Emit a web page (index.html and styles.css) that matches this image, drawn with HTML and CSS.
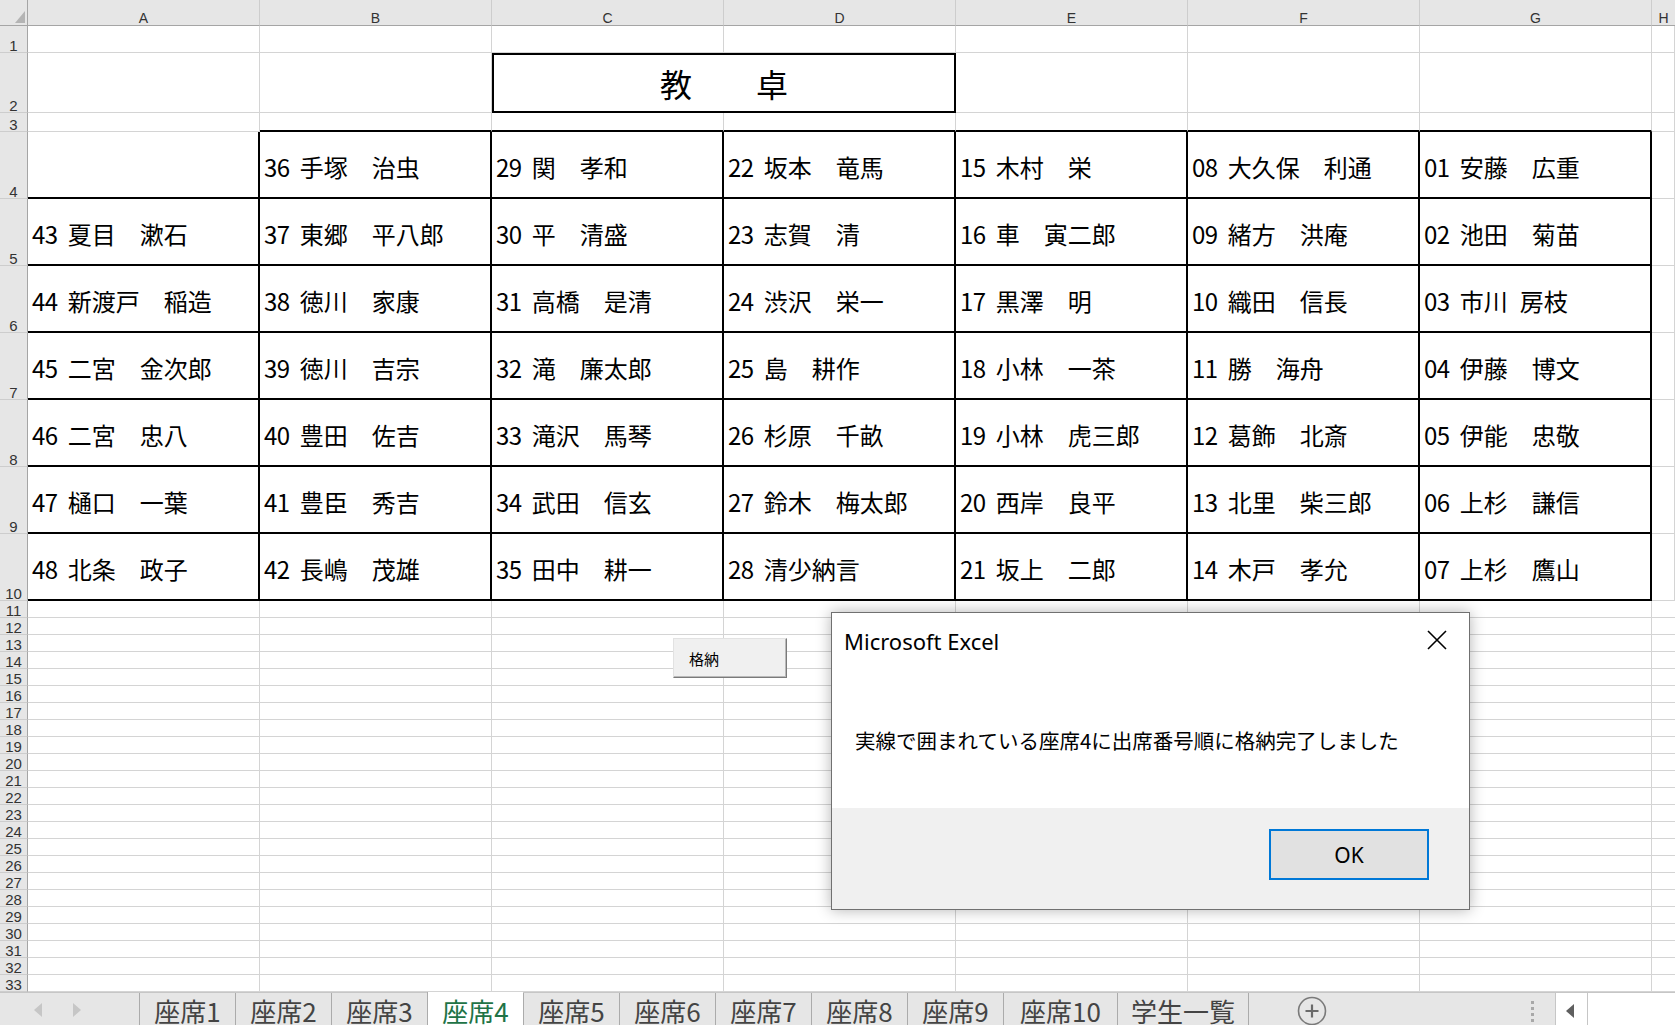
FILE: index.html
```html
<!DOCTYPE html>
<html lang="ja">
<head>
<meta charset="utf-8">
<title>座席4 - Excel</title>
<link rel="stylesheet" href="styles.css">
</head>
<body>
<div class="app">
  <div class="sheet">
    <div class="corner"></div>
    <div class="ch">A</div><div class="ch">B</div><div class="ch">C</div><div class="ch">D</div><div class="ch">E</div><div class="ch">F</div><div class="ch">G</div><div class="ch last">H</div>

    <div class="rh">1</div>
    <div class="c"></div><div class="c"></div><div class="c"></div><div class="c"></div><div class="c"></div><div class="c"></div><div class="c"></div><div class="c"></div>

    <div class="rh">2</div>
    <div class="c"></div><div class="c"></div><div class="teacher">教　　卓</div><div class="c"></div><div class="c"></div><div class="c"></div><div class="c"></div>

    <div class="rh">3</div>
    <div class="c"></div><div class="c tb"></div><div class="c tb"></div><div class="c tb"></div><div class="c tb"></div><div class="c tb"></div><div class="c tb"></div><div class="c"></div>

    <div class="rh">4</div>
    <div class="c tr tb"></div>
    <div class="s"><span class="n">36</span>手塚　治虫</div>
    <div class="s"><span class="n">29</span>関　孝和</div>
    <div class="s"><span class="n">22</span>坂本　竜馬</div>
    <div class="s"><span class="n">15</span>木村　栄</div>
    <div class="s"><span class="n">08</span>大久保　利通</div>
    <div class="s"><span class="n">01</span>安藤　広重</div>
    <div class="c"></div>

    <div class="rh">5</div>
    <div class="s"><span class="n">43</span>夏目　漱石</div>
    <div class="s"><span class="n">37</span>東郷　平八郎</div>
    <div class="s"><span class="n">30</span>平　清盛</div>
    <div class="s"><span class="n">23</span>志賀　清</div>
    <div class="s"><span class="n">16</span>車　寅二郎</div>
    <div class="s"><span class="n">09</span>緒方　洪庵</div>
    <div class="s"><span class="n">02</span>池田　菊苗</div>
    <div class="c"></div>

    <div class="rh">6</div>
    <div class="s"><span class="n">44</span>新渡戸　稲造</div>
    <div class="s"><span class="n">38</span>徳川　家康</div>
    <div class="s"><span class="n">31</span>高橋　是清</div>
    <div class="s"><span class="n">24</span>渋沢　栄一</div>
    <div class="s"><span class="n">17</span>黒澤　明</div>
    <div class="s"><span class="n">10</span>織田　信長</div>
    <div class="s"><span class="n">03</span>市川&ensp;房枝</div>
    <div class="c"></div>

    <div class="rh">7</div>
    <div class="s"><span class="n">45</span>二宮　金次郎</div>
    <div class="s"><span class="n">39</span>徳川　吉宗</div>
    <div class="s"><span class="n">32</span>滝　廉太郎</div>
    <div class="s"><span class="n">25</span>島　耕作</div>
    <div class="s"><span class="n">18</span>小林　一茶</div>
    <div class="s"><span class="n">11</span>勝　海舟</div>
    <div class="s"><span class="n">04</span>伊藤　博文</div>
    <div class="c"></div>

    <div class="rh">8</div>
    <div class="s"><span class="n">46</span>二宮　忠八</div>
    <div class="s"><span class="n">40</span>豊田　佐吉</div>
    <div class="s"><span class="n">33</span>滝沢　馬琴</div>
    <div class="s"><span class="n">26</span>杉原　千畝</div>
    <div class="s"><span class="n">19</span>小林　虎三郎</div>
    <div class="s"><span class="n">12</span>葛飾　北斎</div>
    <div class="s"><span class="n">05</span>伊能　忠敬</div>
    <div class="c"></div>

    <div class="rh">9</div>
    <div class="s"><span class="n">47</span>樋口　一葉</div>
    <div class="s"><span class="n">41</span>豊臣　秀吉</div>
    <div class="s"><span class="n">34</span>武田　信玄</div>
    <div class="s"><span class="n">27</span>鈴木　梅太郎</div>
    <div class="s"><span class="n">20</span>西岸　良平</div>
    <div class="s"><span class="n">13</span>北里　柴三郎</div>
    <div class="s"><span class="n">06</span>上杉　謙信</div>
    <div class="c"></div>

    <div class="rh">10</div>
    <div class="s"><span class="n">48</span>北条　政子</div>
    <div class="s"><span class="n">42</span>長嶋　茂雄</div>
    <div class="s"><span class="n">35</span>田中　耕一</div>
    <div class="s"><span class="n">28</span>清少納言</div>
    <div class="s"><span class="n">21</span>坂上　二郎</div>
    <div class="s"><span class="n">14</span>木戸　孝允</div>
    <div class="s"><span class="n">07</span>上杉　鷹山</div>
    <div class="c"></div>

    <div class="blank"></div>
    <div class="rh">11</div><div class="rh">12</div><div class="rh">13</div><div class="rh">14</div><div class="rh">15</div>
    <div class="rh">16</div><div class="rh">17</div><div class="rh">18</div><div class="rh">19</div><div class="rh">20</div>
    <div class="rh">21</div><div class="rh">22</div><div class="rh">23</div><div class="rh">24</div><div class="rh">25</div>
    <div class="rh">26</div><div class="rh">27</div><div class="rh">28</div><div class="rh">29</div><div class="rh">30</div>
    <div class="rh">31</div><div class="rh">32</div><div class="rh">33</div>
  </div>

  <div class="tabbar">
    <div class="nav">
      <svg width="8" height="14" viewBox="0 0 8 14"><polygon points="8,0 8,14 0,7" fill="#c6c6c6"/></svg>
      <svg width="8" height="14" viewBox="0 0 8 14"><polygon points="0,0 0,14 8,7" fill="#c6c6c6"/></svg>
    </div>
    <div class="tabs">
      <div class="tab">座席1</div>
      <div class="tab">座席2</div>
      <div class="tab">座席3</div>
      <div class="tab active">座席4</div>
      <div class="tab">座席5</div>
      <div class="tab">座席6</div>
      <div class="tab">座席7</div>
      <div class="tab">座席8</div>
      <div class="tab">座席9</div>
      <div class="tab w10">座席10</div>
      <div class="tab w11">学生一覧</div>
    </div>
    <div class="add">
      <svg width="30" height="30" viewBox="0 0 30 30"><circle cx="15" cy="15" r="13.5" fill="none" stroke="#7a7a7a" stroke-width="1.6"/><path d="M15 8.5v13M8.5 15h13" stroke="#6a6a6a" stroke-width="2.2"/></svg>
    </div>
    <div class="grow"></div>
    <div class="dots"><i></i><i></i><i></i><i></i></div>
    <div class="hscroll">
      <div class="hbtn"><svg width="8" height="14" viewBox="0 0 8 14"><polygon points="8,0 8,14 0,7" fill="#5f5f5f"/></svg></div>
      <div class="htrack"></div>
    </div>
  </div>

  <div class="kakuno">格納</div>

  <div class="dlg">
    <div class="dlg-head">
      <div class="dlg-title">Microsoft Excel</div>
      <div class="dlg-close"><svg width="20" height="20" viewBox="0 0 20 20"><path d="M1 1L19 19M19 1L1 19" stroke="#000" stroke-width="1.6"/></svg></div>
    </div>
    <div class="dlg-body">実線で囲まれている座席4に出席番号順に格納完了しました</div>
    <div class="dlg-foot"><div class="ok">OK</div></div>
  </div>
</div>
</body>
</html>
```

FILE: styles.css
```css
* { box-sizing: border-box; margin: 0; padding: 0; }
html, body { width: 1675px; height: 1025px; overflow: hidden; background: #fff; }
body { font-family: "Noto Sans CJK JP", sans-serif; color: #000; }

.app { position: relative; width: 1675px; height: 1025px; display: flex; flex-direction: column; }

.sheet {
  display: grid;
  grid-template-columns: 28px repeat(7, 232px) 1fr;
  grid-template-rows: 26px 27px 60px 19px repeat(7, 67px) repeat(23, 17px);
  height: 992px;
  flex: none;
}

.corner {
  background: #e6e6e6;
  border-right: 1px solid #a5a5a5;
  border-bottom: 1px solid #a5a5a5;
  display: flex;
  align-items: flex-end;
  justify-content: flex-end;
  padding: 0 2px 2px 0;
}
.corner::after {
  content: "";
  width: 10px;
  height: 12px;
  background: #b4b4b4;
  clip-path: polygon(100% 0, 100% 100%, 0 100%);
}

.ch {
  background: #e6e6e6;
  border-right: 1px solid #cdcdcd;
  border-bottom: 1px solid #a5a5a5;
  text-align: center;
  font: 14px/14px "Liberation Sans", sans-serif;
  color: #333;
  padding-top: 11px;
}
.ch.last { border-right: none; }

.rh {
  grid-column: 1;
  background: #e6e6e6;
  border-right: 1px solid #a5a5a5;
  border-bottom: 1px solid #cdcdcd;
  display: flex;
  align-items: flex-end;
  justify-content: center;
  font: 15px/12px "Liberation Sans", sans-serif;
  color: #333;
  padding-bottom: 0;
}

.c { border-right: 1px solid #d4d4d4; border-bottom: 1px solid #d4d4d4; }
.c.tb { border-bottom: 2px solid #000; }
.c.tr { border-right: 2px solid #000; }

.teacher {
  grid-column: span 2;
  border: 2px solid #000;
  display: flex;
  align-items: center;
  justify-content: center;
  font-size: 32px;
}

.s {
  border-right: 2px solid #000;
  border-bottom: 2px solid #000;
  display: flex;
  align-items: center;
  padding: 4px 0 0 4px;
  font-size: 24px;
  white-space: nowrap;
  overflow: hidden;
}
.s .n { margin-right: 0.42em; letter-spacing: -0.5px; }

.blank {
  grid-column: 2 / -1;
  grid-row: 12 / -1;
  background-image:
    repeating-linear-gradient(to right, transparent 0 231px, #d4d4d4 231px 232px),
    repeating-linear-gradient(to bottom, transparent 0 16px, #d4d4d4 16px 17px);
}

/* sheet tabs */
.tabbar {
  height: 33px;
  flex: none;
  display: flex;
  background: #e6e6e6;
  border-top: 1px solid #c6c6c6;
}
.nav {
  width: 139px;
  display: flex;
  align-items: center;
  padding: 2px 0 0 34px;
  gap: 31px;
}
.tabs { display: flex; }
.tab {
  width: 96px;
  border-left: 1px solid #ababab;
  text-align: center;
  font-size: 26px;
  line-height: 26px;
  padding-top: 5px;
  color: #444;
  white-space: nowrap;
}
.tab.active { background: #fff; color: #217346; margin-top: -1px; padding-top: 6px; }
.tab.w10 { width: 114px; }
.tab.w11 { width: 132px; border-right: 1px solid #ababab; }
.add { margin-left: 48px; padding-top: 3px; }
.grow { flex: 1; }
.dots { width: 3px; margin-right: 21px; display: flex; flex-direction: column; gap: 3px; padding-top: 8px; }
.dots i { display: block; width: 3px; height: 3px; background: #a8a8a8; }
.hscroll { width: 120px; display: flex; }
.hbtn {
  width: 33px;
  background: #fff;
  border-left: 1px solid #c6c6c6;
  border-right: 1px solid #c6c6c6;
  display: flex;
  align-items: center;
  justify-content: center;
  padding: 4px 3px 0 0;
}
.htrack { flex: 1; background: #fff; }

/* form button on the sheet */
.kakuno {
  position: absolute;
  left: 673px;
  top: 638px;
  width: 114px;
  height: 40px;
  background: #f0f0f0;
  border: 1px solid;
  border-color: #e2e2e2 #7a7a7a #7a7a7a #e2e2e2;
  box-shadow: inset -1px -1px 0 #b9b9b9;
  display: flex;
  align-items: center;
  padding-left: 15px;
  font-size: 15px;
}

/* message box */
.dlg {
  position: absolute;
  left: 831px;
  top: 612px;
  width: 639px;
  height: 298px;
  border: 1px solid #707070;
  background: #fff;
  box-shadow: 0 0 14px rgba(0, 0, 0, 0.3);
  display: flex;
  flex-direction: column;
}
.dlg-head {
  height: 59px;
  flex: none;
  display: flex;
  justify-content: space-between;
  padding: 14px 22px 0 12px;
}
.dlg-title { font: 22px/28px "Noto Sans", sans-serif; color: #000; }
.dlg-close { padding-top: 3px; }
.dlg-body {
  flex: 1;
  display: flex;
  align-items: center;
  padding-left: 23px;
  font-size: 20.5px;
  white-space: nowrap;
}
.dlg-foot {
  height: 101px;
  flex: none;
  background: #f0f0f0;
  display: flex;
  justify-content: flex-end;
  align-items: flex-start;
  padding: 21px 40px 0 0;
}
.ok {
  width: 160px;
  height: 51px;
  border: 2px solid #0078d7;
  background: #e1e1e1;
  display: flex;
  align-items: center;
  justify-content: center;
  font: 21px "Noto Sans", sans-serif;
  color: #000;
}
```
